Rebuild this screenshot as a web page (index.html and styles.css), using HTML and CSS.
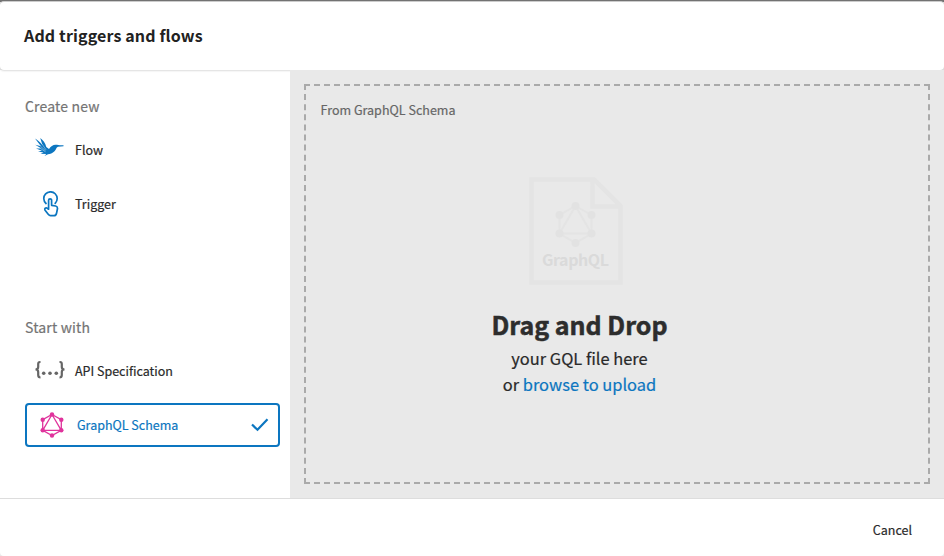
FILE: index.html
```html
<!DOCTYPE html>
<html lang="en">
<head>
<meta charset="utf-8">
<title>Add triggers and flows</title>
<link rel="stylesheet" href="styles.css">
</head>
<body>
<div class="dialog">
  <header class="header"><h1 class="title">Add triggers and flows</h1></header>
  <div class="body">
    <nav class="sidebar">
      <section class="group">
        <h2 class="group-title">Create new</h2>
        <div class="item">
          <svg class="icon icon-flow" viewBox="0 0 30 20" fill="#0c76c0"><path d="M1 1.500C3.500 3 6 5 8.500 8L6.200 1C9 3 11.500 6 12.300 10L15 12C16.500 9.500 19 7.800 21.500 7.800C23.500 7.700 25 8.500 29.500 8.300V9.200L24 9.700C22 10.500 22.200 12.500 20.500 14.300C18.500 16.500 16 16.800 14 17.300L10.500 19L12.300 17L6.500 16.800L9.500 15.500L4 14.600L8 13.800L2 11.600L7.500 11.600L1.200 7.800L7 9.200L1 1.500Z"/><path d="M8 7L12 12.800M6.500 9.300L11.500 13.700M7 11.800L11.500 14.800" stroke="#fff" stroke-width=".4"/></svg>
          <span class="label">Flow</span>
        </div>
        <div class="item">
          <svg class="icon icon-trigger" viewBox="0 0 18 26" fill="none" stroke="#0c76c0" stroke-width="1.700" stroke-linecap="round" stroke-linejoin="round"><path d="M4 12.500A6.700 6.700 0 1 1 13.200 12.300"/><path d="M6.600 17.500V9.300C6.600 7.300 9.600 7.300 9.600 9.300V14.300L13.700 15C15 15.400 15.600 16 15.500 17.500L14.600 22C14.300 23.700 13.500 24.700 12 24.700H8.500C7.300 24.700 6.800 24 6.200 23.200L2.900 18.900C2.300 17.600 3.700 16.400 4.900 17.100L6.600 18.200"/></svg>
          <span class="label">Trigger</span>
        </div>
      </section>
      <section class="group">
        <h2 class="group-title">Start with</h2>
        <div class="item">
          <svg class="icon icon-api" viewBox="0 0 30 18" fill="none" stroke="#666" stroke-width="2.200"><path d="M5.500 1H5C3.500 1 3.200 1.800 3.200 3V6C3.200 7.800 2.300 8.500.5 8.500C2.300 8.500 3.200 9.200 3.200 11V14C3.200 15.500 3.700 16.500 5.500 16.500M24.500 1H25C26.500 1 26.800 1.800 26.800 3V6C26.800 7.800 27.700 8.500 29.500 8.500C27.700 8.500 26.800 9.200 26.800 11V14C26.800 15.500 26.300 16.500 24.500 16.500"/><g fill="#666" stroke="none"><circle cx="8.700" cy="12.300" r="1.800"/><circle cx="15" cy="12.300" r="1.800"/><circle cx="21.300" cy="12.300" r="1.800"/></g></svg>
          <span class="label">API Specification</span>
        </div>
        <div class="item selected">
          <svg class="icon icon-graphql" viewBox="0 0 24 26" fill="none" stroke="#e0339c" stroke-width="1.300"><path d="M12 2.500L21.300 7.700V18.300L12 23.500L2.700 18.300V7.700ZM12 2.500L21.300 18.300H2.700Z"/><g fill="#e0339c" stroke="none"><circle cx="12" cy="2.500" r="2.200"/><circle cx="21.300" cy="7.700" r="2.200"/><circle cx="21.300" cy="18.300" r="2.200"/><circle cx="12" cy="23.500" r="2.200"/><circle cx="2.700" cy="18.300" r="2.200"/><circle cx="2.700" cy="7.700" r="2.200"/></g></svg>
          <span class="label">GraphQL Schema</span>
          <svg class="check" viewBox="0 0 18 14" fill="none" stroke="#0c76c0" stroke-width="2.200"><path d="M1 6.500L6.500 11.800L16.500 1.300"/></svg>
        </div>
      </section>
    </nav>
    <main class="content">
      <div class="dropzone">
        <p class="source">From GraphQL Schema</p>
        <div class="drop">
          <svg class="file" viewBox="0 0 94 108"><g fill="none" stroke="#e4e4e4"><path d="M2.500 2.500H65L91.500 29V105.500H2.500ZM63.500 2.500V29.500H91.500" stroke-width="4.500"/><path d="M46.500 29L62.500 38V56.500L46.500 66L30.500 56.500V38ZM46.500 29L62.500 56.500H30.500Z" stroke-width="2"/></g><g fill="#e2e2e2"><circle cx="46.500" cy="29" r="4"/><circle cx="62.500" cy="38" r="4"/><circle cx="62.500" cy="56.500" r="4"/><circle cx="46.500" cy="66" r="4"/><circle cx="30.500" cy="56.500" r="4"/><circle cx="30.500" cy="38" r="4"/></g><text class="file-text" x="46.500" y="88.500" text-anchor="middle" textLength="67">GraphQL</text></svg>
          <h3 class="drop-title">Drag and Drop</h3>
          <p class="drop-line">your GQL file here</p>
          <p class="drop-line">or <a class="browse">browse to upload</a></p>
        </div>
      </div>
    </main>
  </div>
  <footer class="footer"><button class="cancel">Cancel</button></footer>
</div>
</body>
</html>
```
FILE: styles.css
```css
* { box-sizing: border-box; margin: 0; padding: 0; }
body { background: #777; font-family: "Noto Sans CJK SC", sans-serif; color: #2a2a2a; -webkit-text-stroke: .2px currentColor; }
.dialog { height: 556px; padding-top: 1px; display: flex; flex-direction: column; background: linear-gradient(#737373 0 2px, #e9e9e9 2px); }
.header { height: 69px; flex: none; display: flex; align-items: center; padding: 0 0 2px 24px; background: #fff; border-top: 1px solid #ccc; border-radius: 4px; box-shadow: 0 1px 2px rgba(0,0,0,.14); position: relative; }
.title { font-size: 16px; line-height: 24px; font-weight: 700; color: #222; letter-spacing: .13px; -webkit-text-stroke: 0; }
.body { height: 428px; display: flex; flex: none; }
.sidebar { width: 290px; padding: 24px 10px 0 25px; background: #fff; }
.group { height: 221px; }
.group-title { font-size: 14px; line-height: 24px; font-weight: 400; color: #747474; margin-bottom: 10px; letter-spacing: .17px; }
.item { height: 44px; display: flex; align-items: center; padding-left: 10px; margin-bottom: 10px; }
.label { font-size: 12.500px; line-height: 20px; }
.icon { flex: none; }
.icon-flow { width: 30px; height: 20px; margin: -6px 11px 0 -1px; }
.icon-trigger { width: 18px; height: 26px; margin: 0 15px 0 7px; }
.icon-api { width: 30px; height: 18px; margin: -2px 10px 0 0; overflow: visible; }
.selected { border: 2px solid #0c76c0; border-radius: 4px; padding: 0 9px 0 13px; width: 255px; }
.selected .label { color: #0c76c0; }
.icon-graphql { width: 24px; height: 26px; margin-right: 13px; }
.check { width: 18px; height: 14px; margin-left: auto; }
.content { flex: 1; padding: 14px; background: #e9e9e9; position: relative; }
.dropzone { height: 400px; border: 2px dashed #aaa; padding: 14px 14.500px; }
.source { font-size: 12.500px; line-height: 20px; color: #666; letter-spacing: .02px; }
.drop { display: flex; flex-direction: column; align-items: center; width: 518px; margin-top: 57px; }
.file { width: 94px; height: 108px; margin-left: -7px; }
.file-text { font-size: 16px; font-weight: 700; fill: #dadada; -webkit-text-stroke: 0; }
.drop-title { font-size: 25px; line-height: 36px; font-weight: 700; margin: 21px 0 3px; color: #2d2d2d; -webkit-text-stroke: .5px currentColor; }
.drop-line { font-size: 16.450px; line-height: 26px; }
.browse { color: #0c76c0; }
.footer { flex: 1; border-top: 1px solid #ddd; background: #fff; border-radius: 0 0 4px 4px; display: flex; justify-content: flex-end; align-items: center; padding: 5px 32px 0 0; }
.cancel { border: 0; background: none; font-family: inherit; font-size: 12.500px; line-height: 20px; color: #2a2a2a; }
```
